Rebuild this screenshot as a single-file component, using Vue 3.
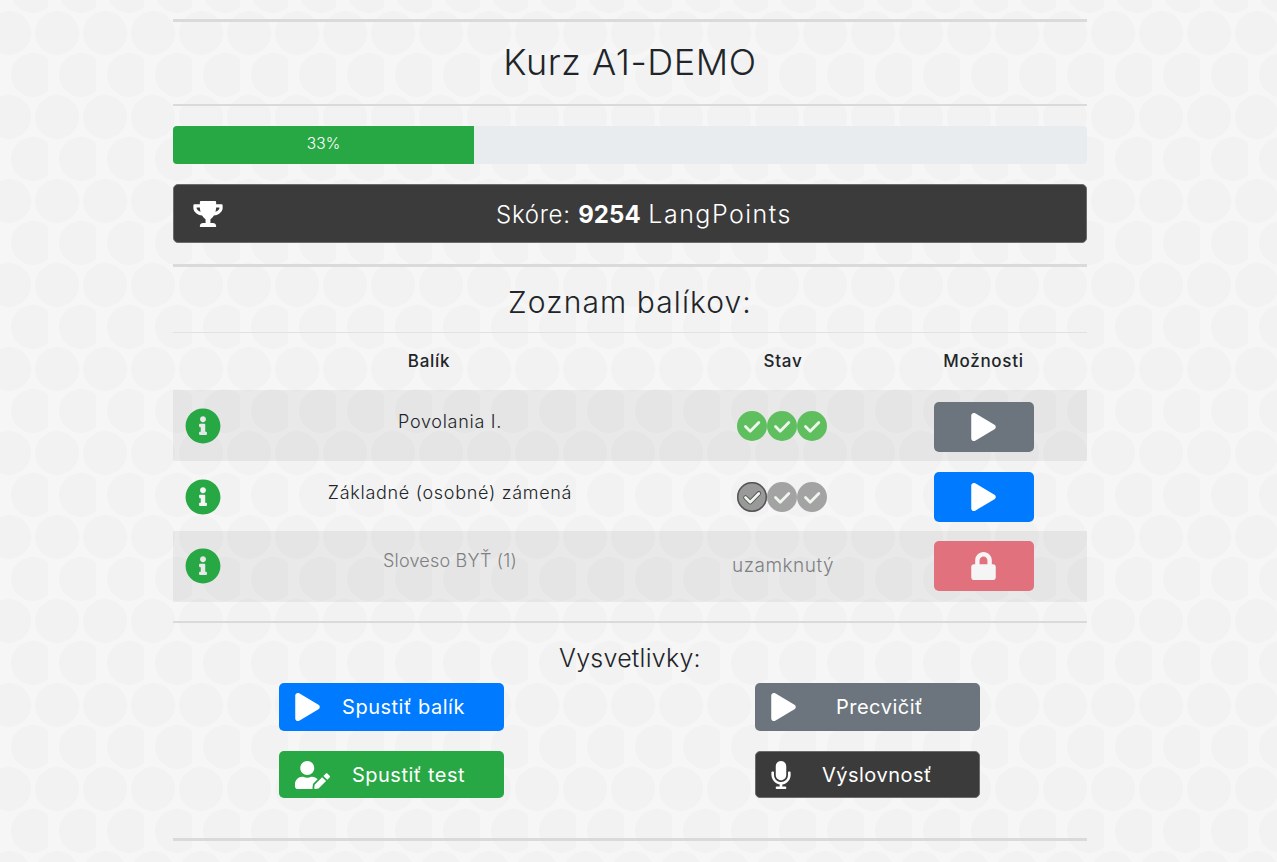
<script setup>
const play = 'M424.4 214.7L72.4 6.6C43.8-10.3 0 6.1 0 47.9V464c0 37.5 40.7 60.1 72.4 41.3l352-208c31.4-18.5 31.5-64.1 0-82.6z'
const lock = 'M400 224h-24v-72C376 68.2 307.8 0 224 0S72 68.2 72 152v72H48c-26.5 0-48 21.5-48 48v192c0 26.5 21.5 48 48 48h352c26.5 0 48-21.5 48-48V272c0-26.5-21.5-48-48-48zm-104 0H152v-72c0-39.7 32.3-72 72-72s72 32.3 72 72v72z'
const info = 'M256 8C119.043 8 8 119.083 8 256c0 136.997 111.043 248 248 248s248-111.003 248-248C504 119.083 392.957 8 256 8zm0 110c23.196 0 42 18.804 42 42s-18.804 42-42 42-42-18.804-42-42 18.804-42 42-42zm56 254c0 6.627-5.373 12-12 12h-88c-6.627 0-12-5.373-12-12v-24c0-6.627 5.373-12 12-12h12v-64h-12c-6.627 0-12-5.373-12-12v-24c0-6.627 5.373-12 12-12h64c6.627 0 12 5.373 12 12v100h12c6.627 0 12 5.373 12 12v24z'
const check = 'M8.5 15.5l4.7 4.7 8.6-8.8'
const trophy = 'M552 64H448V24c0-13.3-10.7-24-24-24H152c-13.3 0-24 10.7-24 24v40H24C10.7 64 0 74.7 0 88v56c0 35.7 22.5 72.4 61.9 100.7 31.5 22.7 69.8 37.1 110 41.7C203.3 338.5 240 360 240 360v72h-48c-35.3 0-64 20.7-64 56v12c0 6.6 5.4 12 12 12h296c6.6 0 12-5.4 12-12v-12c0-35.3-28.7-56-64-56h-48v-72s36.7-21.5 68.1-73.6c40.3-4.6 78.6-19 110-41.7 39.3-28.3 61.9-65 61.9-100.7V88c0-13.3-10.7-24-24-24zM99.3 192.8C74.9 175.2 64 155.6 64 144v-16h64.2c1 32.6 5.8 61.2 12.8 86.2-15.1-5.2-29.2-12.4-41.7-21.4zM512 144c0 16.1-17.7 36.1-35.3 48.8-12.5 9-26.7 16.2-41.8 21.4 7-25 11.8-53.6 12.8-86.2H512v16z'
const mic = 'M176 352c53.02 0 96-42.98 96-96V96c0-53.02-42.98-96-96-96S80 42.98 80 96v160c0 53.02 42.98 96 96 96zm160-160h-16c-8.84 0-16 7.16-16 16v48c0 74.8-64.49 134.82-140.79 127.38C96.71 376.89 48 317.11 48 250.3V208c0-8.84-7.16-16-16-16H16c-8.84 0-16 7.16-16 16v40.16c0 89.64 63.97 169.55 152 181.69V464H96c-8.84 0-16 7.16-16 16v16c0 8.84 7.16 16 16 16h160c8.84 0 16-7.16 16-16v-16c0-8.84-7.16-16-16-16h-56v-33.77C285.71 418.47 352 344.9 352 256v-48c0-8.84-7.16-16-16-16z'
const userEdit = 'M224 256c70.7 0 128-57.3 128-128S294.7 0 224 0 96 57.3 96 128s57.3 128 128 128zm89.6 32h-16.7c-22.2 10.2-46.9 16-72.9 16s-50.6-5.8-72.9-16h-16.7C60.2 288 0 348.2 0 422.4V464c0 26.5 21.5 48 48 48h274.9c-2.4-6.8-3.4-14-2.6-21.3l6.8-60.9 1.2-11.1 7.9-7.9 77.3-77.3c-24.5-27.7-60-45.5-100.1-45.5zm45.3 145.3l-6.8 61c-1.1 10.2 7.5 18.8 17.6 17.6l60.9-6.8 137.9-137.9-71.7-71.7-137.9 137.8zM633 268.9L595.1 231c-9.3-9.3-24.5-9.3-33.8 0l-37.8 37.8-4.1 4.1 71.8 71.7 41.8-41.8c9.3-9.4 9.3-24.5 0-33.9z'

const rows = [
  { name: 'Povolania I.', tone: 'done', btn: 'gray', icon: play },
  { name: 'Základné (osobné) zámená', tone: 'todo', btn: 'blue', icon: play },
  { name: 'Sloveso BYŤ (1)', locked: true, btn: 'red', icon: lock }
]
</script>

<template>
  <main class="page">
    <hr class="rule thick" />
    <h1>Kurz A1-DEMO</h1>
    <hr class="rule thin" />

    <div class="progress">
      <div class="bar">33%</div>
    </div>

    <div class="score">
      <svg class="trophy" viewBox="0 0 576 512"><path :d="trophy" /></svg>
      <span>Skóre: <b>9254</b> <span class="lp">LangPoints</span></span>
    </div>

    <hr class="rule thick mid" />
    <h2>Zoznam balíkov:</h2>

    <section class="table">
      <div class="row head">
        <div></div>
        <div class="name">Balík</div>
        <div class="stav">Stav</div>
        <div class="center">Možnosti</div>
      </div>
      <div v-for="r in rows" :key="r.name" class="row item" :class="{ locked: r.locked }">
        <svg class="info" viewBox="0 0 512 512"><path :d="info" /></svg>
        <div class="name">{{ r.name }}</div>
        <div class="status">
          <span v-if="r.locked" class="lock-text">uzamknutý</span>
          <div v-else class="dots">
            <span v-for="n in 3" :key="n" class="dot" :class="[r.tone, { current: r.tone === 'todo' && n === 1 }]">
              <svg viewBox="0 0 30 30">
                <path v-if="r.tone === 'todo' && n === 1" class="halo" :d="check" />
                <path class="tick" :d="check" />
              </svg>
            </span>
          </div>
        </div>
        <div class="center">
          <button class="action" :class="r.btn"><svg viewBox="0 0 448 512"><path :d="r.icon" /></svg></button>
        </div>
      </div>
    </section>

    <hr class="rule low" />
    <h3>Vysvetlivky:</h3>

    <section class="legend">
      <div class="key blue tall">
        <svg class="ico play" viewBox="0 0 448 512"><path :d="play" /></svg>
        <span class="bal">Spustiť balík</span>
      </div>
      <div class="key gray tall">
        <svg class="ico play" viewBox="0 0 448 512"><path :d="play" /></svg>
        <span class="pre">Precvičiť</span>
      </div>
      <div class="key green">
        <svg class="ico user" viewBox="0 0 640 512"><path :d="userEdit" /></svg>
        <span class="tes">Spustiť test</span>
      </div>
      <div class="key dark">
        <svg class="ico mic" viewBox="0 0 352 512"><path :d="mic" /></svg>
        <span class="vys">Výslovnosť</span>
      </div>
    </section>

    <hr class="rule thick last" />
  </main>
</template>

<style>
html, body {
  margin: 0;
  overflow: hidden;
}
body {
  background-color: #f6f6f6;
  background-image: url("data:image/svg+xml,%3Csvg xmlns='http://www.w3.org/2000/svg' width='48' height='84'%3E%3Cg fill='%23f2f2f2'%3E%3Ccircle cx='9' cy='33' r='22'/%3E%3Ccircle cx='57' cy='33' r='22'/%3E%3Ccircle cx='33' cy='75' r='22'/%3E%3Ccircle cx='33' cy='-9' r='22'/%3E%3C/g%3E%3C/svg%3E");
  background-size: 48px 84px;
}
</style>

<style scoped>
.page {
  width: 914px;
  margin: 0 0 0 173px;
  padding-top: 19px;
  font-family: "Inter", "Liberation Sans", sans-serif;
  color: #212529;
}
.rule { border: 0; margin: 0; height: 2px; background: #dadada; }
.thick { height: 3px; }
.thin { height: 2px; }
h1 {
  margin: 0;
  height: 82px;
  line-height: 81px;
  text-align: center;
  font-size: 36px;
  font-weight: 300;
  letter-spacing: 0.58px;
  color: #212529;
}
.progress {
  height: 38px;
  margin-top: 20px;
  background: #e9ecef;
  border-radius: 4px;
  overflow: hidden;
}
.bar {
  width: 301px;
  height: 100%;
  background: #28a745;
  color: #fff;
  text-align: center;
  line-height: 36px;
  font-size: 15.5px;
  font-weight: 300;
}
.score {
  position: relative;
  box-sizing: border-box;
  height: 59px;
  margin-top: 20px;
  padding-left: 28px;
  background: #3b3b3b;
  border: 1px solid #6c6c6c;
  border-radius: 5px;
  display: flex;
  align-items: center;
  justify-content: center;
  color: #fff;
  font-size: 24px;
  font-weight: 300;
  letter-spacing: 0.7px;
}
.score b { font-weight: 700; letter-spacing: 0.1px; }
.lp { font-size: 25px; letter-spacing: 1.5px; }
.trophy {
  position: absolute;
  left: 19px;
  top: 16px;
  width: 30px;
  height: 26px;
  fill: #fff;
}
.mid { margin-top: 21px; }
h2 {
  margin: 0;
  height: 65px;
  line-height: 70px;
  text-align: center;
  font-size: 30px;
  font-weight: 300;
  letter-spacing: 1.1px;
}
.table { border-top: 1px solid #dee2e6; }
.row {
  display: grid;
  grid-template-columns: 60px 450px 200px 1fr;
  align-items: center;
}
.center { text-align: center; padding-right: 3px; }
.stav { text-align: center; }
.head {
  box-sizing: border-box;
  height: 57px;
  padding-bottom: 1px;
  font-size: 17px;
  font-weight: 500;
  letter-spacing: 0.7px;
}
.head .name { padding-right: 58px; text-align: center; }
.item {
  box-sizing: border-box;
  height: 70.5px;
  padding-top: 2px;
  font-size: 18px;
  font-weight: 300;
  letter-spacing: 0.7px;
}
.item.locked { padding-top: 0; padding-bottom: 1px; }
.item:nth-child(even) { background: rgba(0, 0, 0, 0.05); }
.item .name {
  align-self: start;
  padding: 18px 16px 0 0;
  text-align: center;
  line-height: 24px;
}
.item.locked .name { letter-spacing: 0.2px; }
.item.locked .name, .lock-text { color: #7d7f82; }
.info {
  width: 36px;
  height: 36px;
  margin-left: 12px;
  fill: #28a745;
}
.status { display: flex; justify-content: center; align-items: center; }
.dots { display: flex; padding-right: 2px; }
.lock-text { font-size: 19px; letter-spacing: 0.5px; }
.dot {
  box-sizing: border-box;
  position: relative;
  width: 30px;
  height: 30px;
  border-radius: 50%;
}
.dot svg { position: absolute; left: 0; top: 0; width: 30px; height: 30px; }
.dot .tick, .dot .halo {
  fill: none;
  stroke-linecap: round;
  stroke-linejoin: round;
}
.dot .tick { stroke: #eef6ee; stroke-width: 2.8; }
.dot .halo { stroke: #4a4a4a; stroke-width: 4.4; }
.done { background: #5fbf5f; }
.todo { background: #a3a3a3; }
.current { background: #999; box-shadow: inset 0 0 0 1.5px #555; }
.action {
  width: 100px;
  height: 50px;
  margin-top: 1px;
  padding: 0;
  border: 0;
  border-radius: 5px;
  display: inline-flex;
  align-items: center;
  justify-content: center;
  vertical-align: middle;
}
.action svg { width: 25px; height: 28px; fill: #fff; }
.action.gray { background: #6c757d; }
.action.blue { background: #007bff; }
.action.red { background: #e0717d; }
.action.red svg { fill: #f5f5f5; }
.low { margin-top: 19.5px; }
h3 {
  margin: 0;
  height: 60px;
  line-height: 70px;
  text-align: center;
  font-size: 25px;
  font-weight: 300;
  letter-spacing: 0.25px;
}
.legend {
  display: grid;
  grid-template-columns: 225px 225px;
  column-gap: 251px;
  row-gap: 20px;
  padding-left: 106px;
}
.key {
  box-sizing: border-box;
  position: relative;
  height: 47px;
  border-radius: 5px;
  color: #fff;
  font-size: 20px;
  font-weight: 400;
  letter-spacing: 0.5px;
  display: flex;
  align-items: center;
  justify-content: center;
}
.tall { height: 48px; }
.key.blue { background: #007bff; }
.key.gray { background: #6c757d; }
.key.green { background: #28a745; }
.key.dark { background: #3b3b3b; border: 1px solid #6c6c6c; }
.ico { position: absolute; fill: #fff; }
.ico.play { left: 16px; top: 10px; width: 25px; height: 28px; }
.ico.user { left: 16px; top: 10px; width: 35px; height: 28px; }
.ico.mic { left: 15px; top: 9px; width: 20px; height: 28px; }
.bal { padding-left: 24px; }
.pre { padding-left: 24px; }
.tes { padding-left: 34px; }
.vys { padding-left: 19px; }
.last { margin-top: 40px; }
</style>
